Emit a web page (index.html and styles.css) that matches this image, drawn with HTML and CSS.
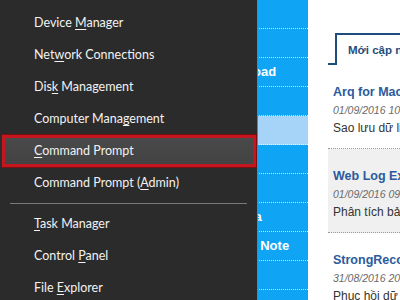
FILE: index.html
```html
<!DOCTYPE html>
<html lang="vi">
<head>
    <meta charset="UTF-8">
    <title>Command Prompt</title>
    <link rel="stylesheet" href="styles.css">
</head>
<body>

    <div class="page">
        <!-- Cột menu xanh của trang -->
        <aside class="sidebar">
            <div class="side-item">Web</div>
            <div class="side-item">Mac</div>
            <div class="side-item">Download</div>
            <div class="side-item">Linux</div>
            <div class="side-item active">Game</div>
            <div class="side-item">iOS</div>
            <div class="side-item">Office</div>
            <div class="side-item">Camera</div>
            <div class="side-item">Simple Note</div>
            <div class="side-item">Video</div>
        </aside>

        <main class="content">
            <div class="tabs">
                <span class="tab">Mới cập nhật</span>
            </div>

            <div class="post">
                <div class="post-title">Arq for Mac</div>
                <div class="post-date">01/09/2016 10:15</div>
                <div class="post-desc">Sao lưu dữ liệu</div>
            </div>

            <div class="post shaded">
                <div class="post-title">Web Log Explorer</div>
                <div class="post-date">01/09/2016 09:40</div>
                <div class="post-desc">Phân tích bản ghi</div>
            </div>

            <div class="post">
                <div class="post-title">StrongRecovery</div>
                <div class="post-date">31/08/2016 20:30</div>
                <div class="post-desc">Phục hồi dữ liệu</div>
            </div>
        </main>
    </div>

    <!-- Menu Win + X -->
    <nav class="winx-menu">
        <div class="menu-item">Device <u>M</u>anager</div>
        <div class="menu-item">Net<u>w</u>ork Connections</div>
        <div class="menu-item">Dis<u>k</u> Management</div>
        <div class="menu-item">Computer Mana<u>g</u>ement</div>
        <div class="menu-item selected"><u>C</u>ommand Prompt</div>
        <div class="menu-item">Command Prompt (<u>A</u>dmin)</div>
        <div class="menu-sep"></div>
        <div class="menu-item"><u>T</u>ask Manager</div>
        <div class="menu-item">Control <u>P</u>anel</div>
        <div class="menu-item">File <u>E</u>xplorer</div>
    </nav>

</body>
</html>
```

FILE: styles.css
```css
:root {
    --menu-background: #2b2b2b;
    --menu-text: #f2f2f2;
    --red-frame: #c4161c;
    --side-blue: #10a5f4;
    --side-active: #a6d4f9;
    --navy: #1f4e7d;
    --title-blue: #2b5b9c;
}

body {
    margin: 0;
    width: 400px;
    height: 300px;
    overflow: hidden;
    position: relative;
    background-color: #fff;
    font-family: 'Liberation Sans', Arial, sans-serif;
}

.page {
    display: flex;
    height: 300px;
}

/* Cột xanh */
.sidebar {
    width: 308px;
    flex-shrink: 0;
    background-color: var(--side-blue);
}

.side-item {
    height: 28px;
    line-height: 28px;
    padding-left: 214px;
    border-bottom: 1px dotted rgba(255, 255, 255, 0.75);
    color: #fff;
    font-size: 13px;
    font-weight: bold;
    white-space: nowrap;
}

.side-item.active {
    background-color: var(--side-active);
}

/* Nội dung */
.content {
    flex: 1;
    padding-left: 20px;
    padding-top: 33px;
    overflow: hidden;
}

.tabs {
    border-bottom: 2px solid var(--navy);
    height: 30px;
    display: flex;
    white-space: nowrap;
}

.tab {
    margin-left: 7px;
    margin-bottom: -2px;
    padding-left: 11px;
    border-left: 2px solid var(--navy);
    border-top: 2px solid var(--navy);
    background-color: #fff;
    color: var(--navy);
    font-size: 11.5px;
    font-weight: bold;
    line-height: 30px;
    flex: 1;
}

.post {
    height: 84px;
    padding: 18px 0 0 5px;
    box-sizing: border-box;
    border-bottom: 1px dotted #999;
    white-space: nowrap;
}

.post.shaded {
    background-color: #f0f0f0;
}

.post-title {
    color: var(--title-blue);
    font-size: 12.5px;
    font-weight: bold;
    line-height: 18px;
}

.post-date {
    color: #6a6a6a;
    font-size: 10.5px;
    font-style: italic;
    line-height: 18px;
}

.post-desc {
    color: #333;
    font-size: 12px;
    line-height: 19px;
}

/* Menu Win + X */
.winx-menu {
    position: absolute;
    top: 0;
    left: 0;
    width: 258px;
    height: 300px;
    padding-top: 7px;
    box-sizing: border-box;
    background-color: var(--menu-background);
    border-right: 1px solid #6f7f8c;
    font-family: Lato, 'Noto Sans', sans-serif;
}

.menu-item {
    height: 32px;
    line-height: 32px;
    padding-left: 34px;
    color: var(--menu-text);
    font-size: 12.5px;
    white-space: nowrap;
}

.menu-item u {
    text-underline-offset: 2px;
}

.menu-item.selected {
    margin: 0 1px 0 2px;
    padding-left: 32px;
    background: linear-gradient(#4a4a4a, #424242);
    box-shadow: inset 0 0 0 3px var(--red-frame), 0 0 0 1px #7a1014;
}

.menu-sep {
    height: 1px;
    margin: 4px 10px 4px 10px;
    background-color: #7a7a7a;
}
```
